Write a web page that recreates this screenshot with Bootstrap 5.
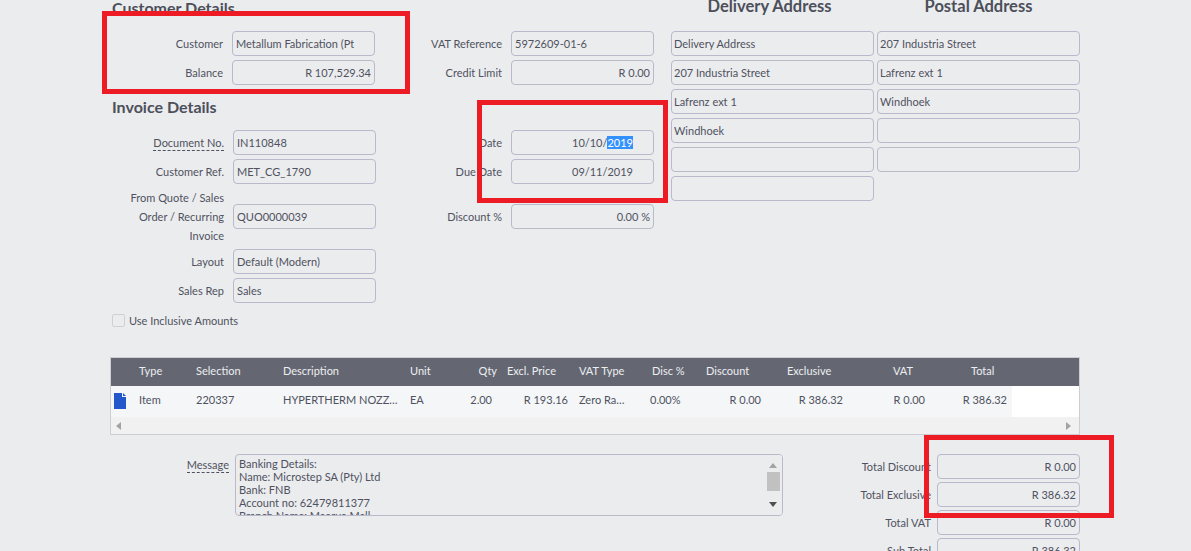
<!DOCTYPE html>
<html lang="en">
<head>
<meta charset="utf-8">
<title>Invoice</title>
<link href="https://cdn.jsdelivr.net/npm/bootstrap@5.3.0/dist/css/bootstrap.min.css" rel="stylesheet">
<style>
html,body{height:551px;overflow:hidden}
body{background:#ebecee;color:#4f525e;font-family:Lato,"Liberation Sans",sans-serif;font-size:11px;line-height:19px}
.sheet{position:relative;width:1191px;height:555px;margin-top:-4px;padding-left:111px;overflow:hidden}
.topform{width:969px}
.cola{width:265px}
.colb{width:278px;padding-top:35px}
.colc{width:203px;margin-left:17px}
.cold{width:203px;margin-left:3px}
.sect{font-size:16.5px;font-weight:700;line-height:22px;margin:0;color:#4c4f5a}
.sect-a{height:24px;line-height:24px;margin-bottom:11px;margin-left:1px;font-size:16px}
.sect-i{margin:11px 0 12px 1px;font-size:16px}
.sect-c{height:20px;line-height:20px;margin-bottom:15px;text-align:center}
.colc .sect-c{padding-right:6px}
.fld{display:flex;align-items:center;height:25px;margin-bottom:4px}
.fld-tall{height:57px}
.lab{flex:none;text-align:right;padding-right:9px}
.cola .lab{width:122px}
.cola .cust .lab{width:121px}
.colb .lab{width:135px;padding-right:9px}
.lab-u span{border-bottom:1px dashed #4f525e;line-height:14px;display:inline-block}
.fc{display:block;width:143px;height:25px;flex:none;border:1px solid #b8b9cb;border-radius:4px;background:#ebecee;color:#4f525e;font-size:11px;line-height:23px;padding:0 3px;box-shadow:none}
.fc:focus{background:#ebecee;color:#4f525e;border-color:#b8b9cb;box-shadow:none}
.fc-clip{padding-right:20px}
.fc-r{text-align:right;padding-right:3px}
.fc-date{padding-right:20px;overflow:hidden;white-space:nowrap}
.sel{background:#3390ff;color:#fff}
.colc .fc,.cold .fc{width:100%;padding-left:2px}
.incl{display:flex;align-items:center;margin-top:8px;height:18px;padding-left:1px}
.tick{width:13px;height:13px;border:1px solid #cfd0d6;border-radius:2px;background:#ebecee;margin-right:4px;flex:none}
.gridbox{margin-top:28px;width:970px;margin-left:-1px;border:1px solid #cdced3;background:#fff}
.gridtab{table-layout:fixed;width:968px;margin:0;border-collapse:collapse}
.gridtab th,.gridtab td{border:0;box-shadow:none;padding:0 6px 4px;white-space:nowrap;overflow:hidden;text-overflow:ellipsis;color:#4f525e;font-size:11px;font-weight:400;background:#f4f6f8;vertical-align:middle}
.gridtab th{height:28px;background:#646771;color:#eceef2}
.gridtab td{height:31px}
.gridtab td:last-child{background:#fff}
.c1{width:22px}.c2{width:57px}.c3{width:87px}.c4{width:127px}.c5{width:44px}.c6{width:55px}.c7{width:70px}.c8{width:71px}.c9{width:56px}.c10{width:66px}.c11{width:82px}.c12{width:82px}.c13{width:82px}
.gridtab th.pl4{padding-left:4px;padding-right:0}
.gridtab th.pl8{padding-left:8px;padding-right:0}
.gridtab th.pl21{padding-left:21px}
.gridtab th.pl45{padding-left:45px}
.gridtab th.pl41{padding-left:41px}
.gridtab td.pr5{padding-right:5px}
.gridtab td.pr11{padding-right:11px}
.gridtab td.pr18{padding-right:18px}
.gridtab td.ic{padding:0 0 2px 3px}
.doc{display:block;width:12px;height:16px}
.hbar{display:flex;justify-content:space-between;align-items:center;height:17px;background:#f1f1f1;padding:0 8px 0 5px}
.lower{display:flex;margin-top:19px;width:969px}
.msglab{width:118px;text-align:right;flex:none}
.msglab span{border-bottom:1px dashed #4f525e;display:inline-block;line-height:14px;margin-top:4px}
.msgbox{display:flex;width:548px;height:62px;margin-left:6px;border:1px solid #b8b9cb;border-radius:4px;overflow:hidden;flex:none}
.msgtext{flex:1;padding:2px 3px;line-height:13px;white-space:pre-line;overflow:hidden}
.vbar{width:18px;flex:none;background:#ebecee;display:flex;flex-direction:column;align-items:center;justify-content:space-between;padding:8px 0}
.thumb{width:13px;height:19px;background:#c1c1c1;margin-top:4px;margin-bottom:auto}
.totals{margin-left:auto;width:297px}
.totals .fld{margin-bottom:3px}
.totals .lab{width:154px;padding-right:6px}
.mark-red{position:absolute;border:5px solid #ed1c24;pointer-events:none}
.m1{left:102px;top:15px;width:308px;height:83px}
.m2{left:477px;top:104px;width:191px;height:103px}
.m3{left:924px;top:439px;width:190px;height:83px}
</style>
</head>
<body>
<div class="sheet">
  <div class="topform d-flex">
    <div class="cola">
      <h5 class="sect sect-a">Customer Details</h5>
      <div class="cust">
        <div class="fld"><div class="lab">Customer</div><input class="form-control fc fc-clip" readonly value="Metallum Fabrication (Pty) Ltd"></div>
        <div class="fld"><div class="lab">Balance</div><input class="form-control fc fc-r" readonly value="R 107,529.34"></div>
      </div>
      <h5 class="sect sect-i">Invoice Details</h5>
      <div class="fld"><div class="lab lab-u"><span>Document No.</span></div><input class="form-control fc" readonly value="IN110848"></div>
      <div class="fld"><div class="lab">Customer Ref.</div><input class="form-control fc" readonly value="MET_CG_1790"></div>
      <div class="fld fld-tall"><div class="lab">From Quote / Sales Order / Recurring Invoice</div><input class="form-control fc" readonly value="QUO0000039"></div>
      <div class="fld"><div class="lab">Layout</div><input class="form-control fc" readonly value="Default (Modern)"></div>
      <div class="fld"><div class="lab">Sales Rep</div><input class="form-control fc" readonly value="Sales"></div>
      <div class="incl"><span class="tick"></span>Use Inclusive Amounts</div>
    </div>
    <div class="colb">
      <div class="fld"><div class="lab">VAT Reference</div><input class="form-control fc" readonly value="5972609-01-6"></div>
      <div class="fld"><div class="lab">Credit Limit</div><input class="form-control fc fc-r" readonly value="R 0.00"></div>
      <div style="height:41px"></div>
      <div class="fld"><div class="lab">Date</div><div class="form-control fc fc-r fc-date">10/10/<span class="sel">2019</span></div></div>
      <div class="fld"><div class="lab">Due Date</div><div class="form-control fc fc-r fc-date">09/11/2019</div></div>
      <div class="fld fld-tall"><div class="lab">Discount %</div><input class="form-control fc fc-r" readonly value="0.00 %"></div>
    </div>
    <div class="colc">
      <h5 class="sect sect-c">Delivery Address</h5>
      <div class="fld"><input class="form-control fc" readonly value="Delivery Address"></div>
      <div class="fld"><input class="form-control fc" readonly value="207 Industria Street"></div>
      <div class="fld"><input class="form-control fc" readonly value="Lafrenz ext 1"></div>
      <div class="fld"><input class="form-control fc" readonly value="Windhoek"></div>
      <div class="fld"><input class="form-control fc" readonly value=""></div>
      <div class="fld"><input class="form-control fc" readonly value=""></div>
    </div>
    <div class="cold">
      <h5 class="sect sect-c">Postal Address</h5>
      <div class="fld"><input class="form-control fc" readonly value="207 Industria Street"></div>
      <div class="fld"><input class="form-control fc" readonly value="Lafrenz ext 1"></div>
      <div class="fld"><input class="form-control fc" readonly value="Windhoek"></div>
      <div class="fld"><input class="form-control fc" readonly value=""></div>
      <div class="fld"><input class="form-control fc" readonly value=""></div>
    </div>
  </div>

  <div class="gridbox">
    <table class="table gridtab">
      <thead>
        <tr>
          <th class="c1"></th><th class="c2">Type</th><th class="c3">Selection</th><th class="c4">Description</th><th class="c5">Unit</th>
          <th class="c6 text-end">Qty</th><th class="c7 pl4">Excl. Price</th><th class="c8">VAT Type</th><th class="c9 pl8">Disc %</th>
          <th class="c10">Discount</th><th class="c11 pl21">Exclusive</th><th class="c12 pl45">VAT</th><th class="c13 pl41">Total</th><th></th>
        </tr>
      </thead>
      <tbody>
        <tr>
          <td class="ic"><svg class="doc" viewBox="0 0 12 16"><path fill="#2258c9" d="M0 0H8V4H12V16H0Z"/><path fill="#2258c9" d="M9 0L12 3H9Z"/></svg></td>
          <td>Item</td><td>220337</td><td>HYPERTHERM NOZZLE 45A</td><td>EA</td>
          <td class="text-end pr11">2.00</td><td class="text-end pr5">R 193.16</td><td class="pr18">Zero Rated</td><td>0.00%</td>
          <td class="text-end pr5">R 0.00</td><td class="text-end pr5">R 386.32</td><td class="text-end pr5">R 0.00</td><td class="text-end pr5">R 386.32</td><td></td>
        </tr>
      </tbody>
    </table>
    <div class="hbar">
      <svg width="5" height="8" viewBox="0 0 5 8"><path fill="#a3a3a3" d="M5 0V8L0 4Z"/></svg>
      <svg width="5" height="8" viewBox="0 0 5 8"><path fill="#a3a3a3" d="M0 0V8L5 4Z"/></svg>
    </div>
  </div>

  <div class="lower">
    <div class="msglab"><span>Message</span></div>
    <div class="msgbox">
      <div class="msgtext">Banking Details:
Name: Microstep SA (Pty) Ltd
Bank: FNB
Account no: 62479811377
Branch Name: Maerua Mall</div>
      <div class="vbar">
        <svg width="8" height="5" viewBox="0 0 8 5"><path fill="#a3a3a3" d="M0 5H8L4 0Z"/></svg>
        <span class="thumb"></span>
        <svg width="8" height="5" viewBox="0 0 8 5"><path fill="#505050" d="M0 0H8L4 5Z"/></svg>
      </div>
    </div>
    <div class="totals">
      <div class="fld justify-content-end"><div class="lab">Total Discount</div><input class="form-control fc fc-r" readonly value="R 0.00"></div>
      <div class="fld justify-content-end"><div class="lab">Total Exclusive</div><input class="form-control fc fc-r" readonly value="R 386.32"></div>
      <div class="fld justify-content-end"><div class="lab">Total VAT</div><input class="form-control fc fc-r" readonly value="R 0.00"></div>
      <div class="fld justify-content-end"><div class="lab">Sub Total</div><input class="form-control fc fc-r" readonly value="R 386.32"></div>
    </div>
  </div>

  <div class="mark-red m1"></div>
  <div class="mark-red m2"></div>
  <div class="mark-red m3"></div>
</div>
<script src="https://cdn.jsdelivr.net/npm/bootstrap@5.3.0/dist/js/bootstrap.bundle.min.js"></script>
</body>
</html>
